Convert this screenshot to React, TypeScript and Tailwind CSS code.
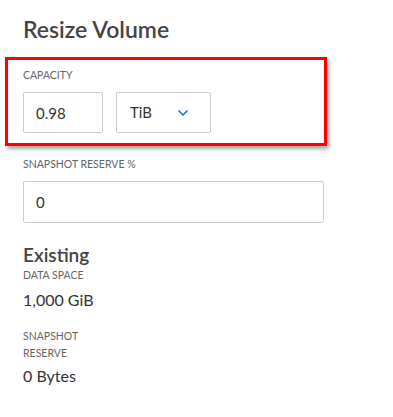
import { ChevronDown } from 'lucide-react';

function Label({ children }: { children: React.ReactNode }) {
  return <div className="text-[10.5px] uppercase leading-[17px] text-[#666]">{children}</div>;
}

export default function App() {
  return (
    <div className="min-h-[417px] bg-white pl-[23px] pt-[14px] font-['Lato','Liberation_Sans',sans-serif] text-[#333]">
      <h1 className="text-[23px] font-semibold leading-[30px] text-[#444]">Resize Volume</h1>

      {/* Capacity (highlighted) */}
      <div className="mt-[13px] ml-[-18px] w-[322px] border-[3px] border-[#f00] px-[15px] pt-[7px] pb-[10px] shadow-[2px_3px_4px_rgba(0,0,0,0.35)]">
        <Label>Capacity</Label>
        <div className="mt-[8px] flex gap-[13px]">
          <input
            readOnly
            value="0.98"
            className="h-[41px] w-[80px] rounded-[2px] border border-[#ccc] px-[12px] text-[15px] text-[#333] outline-none"
          />
          <div className="flex h-[41px] w-[95px] items-center justify-between rounded-[2px] border border-[#ccc] pl-[13px] pr-[19px] text-[15px]">
            <span>TiB</span>
            <ChevronDown className="h-[16px] w-[16px] text-[#1a6fe0]" strokeWidth={2.5} />
          </div>
        </div>
      </div>

      <div className="mt-[10px]">
        <Label>Snapshot Reserve %</Label>
        <input
          readOnly
          value="0"
          className="mt-[8px] h-[42px] w-[301px] rounded-[2px] border border-[#ccc] px-[12px] text-[15px] text-[#333] outline-none"
        />
      </div>

      <h2 className="mt-[20px] text-[19px] font-semibold leading-[24px] text-[#444]">Existing</h2>
      <div className="w-[90px]">
        <Label>Data Space</Label>
        <div className="mt-[6px] text-[16px] leading-[20px]">1,000 GiB</div>
        <div className="mt-[18px]">
          <Label>Snapshot Reserve</Label>
        </div>
        <div className="mt-[4px] text-[16px] leading-[20px]">0 Bytes</div>
      </div>
    </div>
  );
}
